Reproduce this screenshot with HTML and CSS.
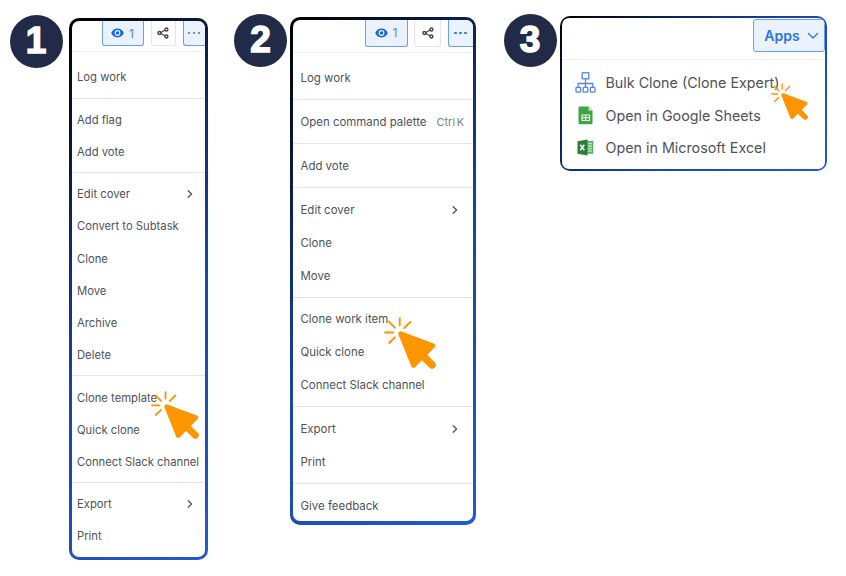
FILE: index.html
```html
<!DOCTYPE html>
<html lang="en">
<head>
  <meta charset="UTF-8" />
  <meta name="viewport" content="width=device-width, initial-scale=1.0"/>
  <title>Where to find Clone</title>
  <link rel="stylesheet" href="styles.css">
</head>
<body>
  <!-- Shared icons -->
  <svg class="sprite" width="0" height="0">
    <symbol id="eye" viewBox="0 0 14 10">
      <path d="M7 0.2C3.8 0.2 1.2 2.300 0.2 5c1 2.700 3.600 4.800 6.800 4.800s5.800-2.100 6.800-4.800C12.800 2.300 10.200 0.200 7 0.200z" fill="#1868db"/>
      <circle cx="7" cy="5" r="3.100" fill="#e9f2fe"/>
      <circle cx="7" cy="5" r="1.900" fill="#1868db"/>
    </symbol>
    <symbol id="share" viewBox="0 0 12 12">
      <path d="M3 6l6-3.500M3 6l6 3.500" stroke="#44464b" stroke-width="1.200"/>
      <g fill="#fff" stroke="#44464b" stroke-width="1.400">
        <circle cx="2.400" cy="6" r="1.500"/>
        <circle cx="9.400" cy="2.500" r="1.500"/>
        <circle cx="9.400" cy="9.500" r="1.500"/>
      </g>
    </symbol>
    <symbol id="chevron" viewBox="0 0 6 8">
      <path d="M1.200 0.800L4.600 4 1.200 7.200" fill="none" stroke="#505258" stroke-width="1.300" stroke-linecap="round" stroke-linejoin="round"/>
    </symbol>
    <symbol id="pointer" viewBox="0 0 48 48">
      <path d="M14.500 1.200v6.500M24.300 4.500l-5.600 5.600M1 14.300h7.500M10 9.800L4.500 4.300M10 18.800l-5.200 5.200" fill="none" stroke="#ff9500" stroke-width="1.800" stroke-linecap="round"/>
      <path d="M15.500 15.500L45 26.500 27.200 44.600z" fill="#ff9500" stroke="#ff9500" stroke-width="4.500" stroke-linejoin="round"/>
      <path d="M36 36l8.300 8.200" stroke="#ff9500" stroke-width="7" stroke-linecap="round"/>
    </symbol>
  </svg>

  <div class="steps">
    <section class="step step-one">
      <div class="badge">1</div>
      <div class="frame">
        <div class="panel">
          <div class="toolbar">
            <div class="btn watch"><svg class="eye"><use href="#eye"/></svg>1</div>
            <div class="btn share"><svg><use href="#share"/></svg></div>
            <div class="btn more"><i></i><i></i><i></i></div>
          </div>
          <ul class="group">
            <li>Log work</li>
          </ul>
          <ul class="group">
            <li>Add flag</li>
            <li>Add vote</li>
          </ul>
          <ul class="group">
            <li>Edit cover <svg class="chevron"><use href="#chevron"/></svg></li>
            <li>Convert to Subtask</li>
            <li>Clone</li>
            <li>Move</li>
            <li>Archive</li>
            <li>Delete</li>
          </ul>
          <ul class="group">
            <li><span class="target">Clone template<svg class="pointer"><use href="#pointer"/></svg></span></li>
            <li>Quick clone</li>
            <li>Connect Slack channel</li>
          </ul>
          <ul class="group">
            <li>Export <svg class="chevron"><use href="#chevron"/></svg></li>
            <li>Print</li>
          </ul>
        </div>
      </div>
    </section>

    <section class="step step-two">
      <div class="badge">2</div>
      <div class="frame">
        <div class="panel">
          <div class="toolbar">
            <div class="btn watch"><svg class="eye"><use href="#eye"/></svg>1</div>
            <div class="btn share"><svg><use href="#share"/></svg></div>
            <div class="btn more"><i></i><i></i><i></i></div>
          </div>
          <ul class="group">
            <li>Log work</li>
          </ul>
          <ul class="group">
            <li>Open command palette <kbd>Ctrl K</kbd></li>
          </ul>
          <ul class="group">
            <li>Add vote</li>
          </ul>
          <ul class="group">
            <li>Edit cover <svg class="chevron"><use href="#chevron"/></svg></li>
            <li>Clone</li>
            <li>Move</li>
          </ul>
          <ul class="group">
            <li><span class="target">Clone work item<svg class="pointer"><use href="#pointer"/></svg></span></li>
            <li>Quick clone</li>
            <li>Connect Slack channel</li>
          </ul>
          <ul class="group">
            <li>Export <svg class="chevron"><use href="#chevron"/></svg></li>
            <li>Print</li>
          </ul>
          <ul class="group">
            <li>Give feedback</li>
          </ul>
        </div>
      </div>
    </section>

    <section class="step step-three">
      <div class="badge">3</div>
      <div class="frame">
        <div class="panel">
          <div class="toolbar">
            <div class="btn apps">Apps
              <svg width="12" height="8" viewBox="0 0 12 8"><path d="M1.500 1.500L6 6l4.500-4.500" fill="none" stroke="#2f75de" stroke-width="1.300" stroke-linecap="round" stroke-linejoin="round"/></svg>
            </div>
          </div>
          <ul class="group">
            <li>
              <svg class="app-icon" viewBox="0 0 21 21" fill="none" stroke="#5584e6" stroke-width="1.300">
                <rect x="7.200" y="0.800" width="6.600" height="6"/>
                <path d="M10.500 6.800v8.400M3.200 15.200v-3.700h14.600v3.700"/>
                <rect x="1" y="15.300" width="4.600" height="4.900" rx=".8"/>
                <rect x="8.200" y="15.300" width="4.600" height="4.900" rx=".8"/>
                <rect x="15.400" y="15.300" width="4.600" height="4.900" rx=".8"/>
              </svg>
              <span class="target">Bulk Clone (Clone Expert)<svg class="pointer"><use href="#pointer"/></svg></span>
            </li>
            <li>
              <svg class="app-icon" viewBox="0 0 21 21">
                <path d="M4.800 1.500h8.700l4 4.200v12.300a1.300 1.300 0 0 1-1.300 1.300H4.800a1.300 1.300 0 0 1-1.300-1.300V2.800a1.300 1.300 0 0 1 1.300-1.300z" fill="#3fa447"/>
                <path d="M13.500 1.500v4.200h4z" fill="#bfe3c1"/>
                <path d="M7 10h7.500v5.500H7zM7 12.700h7.500M10.700 10v5.500" fill="none" stroke="#e6f5e6" stroke-width="1.200"/>
              </svg>
              Open in Google Sheets
            </li>
            <li>
              <svg class="app-icon" viewBox="0 0 21 21">
                <path d="M11 4h7.300v12.800H11z" fill="#54b45c"/>
                <path d="M12.500 6.500h4.500M12.500 9h4.500M12.500 11.500h4.500M12.500 14h4.500" stroke="#b9e2bb" stroke-width="1.300"/>
                <path d="M2.500 4.200l10-1.700v16l-10-1.700z" fill="#2e7d35"/>
                <path d="M5.300 7.700l4 5.600M9.300 7.700l-4 5.600" stroke="#fff" stroke-width="1.500"/>
              </svg>
              Open in Microsoft Excel
            </li>
          </ul>
        </div>
      </div>
    </section>
  </div>
</body>
</html>
```
FILE: styles.css
```css
:root {
  --text: #505258;
  --line: #e3e4e6;
  --navy: #212b48;
}

* {
  box-sizing: border-box;
}

body {
  margin: 0;
  background: #fff;
  color: var(--text);
  font-family: Inter, "Liberation Sans", sans-serif;
}

.sprite {
  position: absolute;
}

.steps {
  display: flex;
  align-items: flex-start;
  padding: 14px 0 0 9.5px;
}

.step {
  display: flex;
  align-items: flex-start;
}

.badge {
  width: 53px;
  height: 53px;
  border-radius: 50%;
  background: var(--navy);
  color: #fff;
  font-family: "Liberation Sans", Arial, sans-serif;
  font-size: 37px;
  font-weight: bold;
  line-height: 52px;
  text-align: center;
  -webkit-text-stroke: 1.500px #fff;
}

.frame {
  background: linear-gradient(135deg, #000, #1a45a6 55%, #1f5bd0);
  padding: 3px;
  border-radius: 10px;
}

.panel {
  background: #fff;
  height: 100%;
  border-radius: 7px;
  overflow: hidden;
}

.toolbar {
  display: flex;
  justify-content: flex-end;
  align-items: flex-start;
  border-bottom: 1px solid #f0f0f2;
}

.btn {
  display: flex;
  align-items: center;
  justify-content: center;
  height: 25px;
  border: 1px solid #6a9ff0;
  border-top: none;
  border-radius: 0 0 3px 3px;
  background: #e9f2fe;
  color: #4688ec;
  font-size: 12px;
}

.eye {
  width: 13px;
  height: 10px;
}

.watch {
  width: 42px;
  gap: 5px;
}

.share {
  width: 25px;
  background: #fff;
  border-color: #e3e4e6;
}

.share svg {
  width: 12px;
  height: 12px;
}

.more {
  gap: 2.5px;
  border-right: none;
  border-bottom-right-radius: 0;
}

.more i {
  width: 2.5px;
  height: 2.5px;
  border-radius: 50%;
  background: #2f75de;
}

.group {
  list-style: none;
  margin: 0;
  padding: 5px 0 4.2px;
}

.group + .group {
  border-top: 1px solid var(--line);
}

.group li {
  display: flex;
  align-items: center;
  white-space: nowrap;
}

.chevron {
  width: 6px;
  height: 8px;
  margin-left: auto;
}

.target {
  position: relative;
}

.pointer {
  position: absolute;
}

/* Step 1 */
.step-one .badge {
  margin-top: 0.5px;
}

.step-one .frame {
  width: 139px;
  height: 542px;
  margin: 4px 0 0 6px;
}

.step-one .toolbar {
  height: 30.500px;
  gap: 7px;
}

.step-one .more {
  width: 22px;
}

.step-one li {
  height: 32.200px;
  padding: 0 12px 0 5.500px;
  font-size: 11.250px;
}

.step-one .toolbar + .group {
  padding-top: 9.700px;
}

.step-one .pointer {
  left: 74px;
  top: 0;
  width: 48px;
  height: 48px;
}

/* Step 2 */
.step-two {
  margin-left: 26.500px;
}

.step-two .frame {
  width: 185.500px;
  height: 508px;
  margin: 3px 0 0 3px;
  padding-bottom: 4px;
}

.step-two .toolbar {
  height: 32.500px;
  gap: 6.500px;
}

.step-two .btn {
  height: 26.500px;
}

.step-two .watch {
  width: 43px;
}

.step-two .share {
  width: 27px;
}

.step-two .more {
  width: 25px;
}

.step-two li {
  height: 32.900px;
  padding: 0 15px 0 7.500px;
  font-size: 11.450px;
}

.step-two .group {
  padding: 5.300px 0 4.600px;
}

.step-two .toolbar + .group {
  padding-top: 9.500px;
}

.step-two kbd {
  margin-left: 10px;
  color: #7d818a;
  font: inherit;
  font-size: 11px;
  word-spacing: -1.500px;
}

.step-two .pointer {
  left: 83px;
  top: 5px;
  width: 52px;
  height: 52px;
}

/* Step 3 */
.step-three {
  margin-left: 28px;
}

.step-three .frame {
  width: 267px;
  height: 155px;
  margin: 2px 0 0 3.500px;
  padding: 2px;
}

.step-three .toolbar {
  height: 42px;
  padding-top: 1px;
}

.apps {
  width: 72px;
  height: 33px;
  gap: 7px;
  padding-left: 5px;
  border-top: 1px solid #6a9ff0;
  border-radius: 3px;
  color: #2f75de;
  font-size: 14px;
  font-weight: 600;
}

.step-three .group {
  padding: 6.300px 0;
}

.step-three li {
  height: 32.500px;
  padding-left: 12.500px;
  gap: 10px;
  font-size: 14.300px;
}

.app-icon {
  width: 21px;
  height: 21px;
}

.step-three .pointer {
  left: 165.500px;
  top: 8.500px;
  width: 37px;
  height: 37px;
}
```
